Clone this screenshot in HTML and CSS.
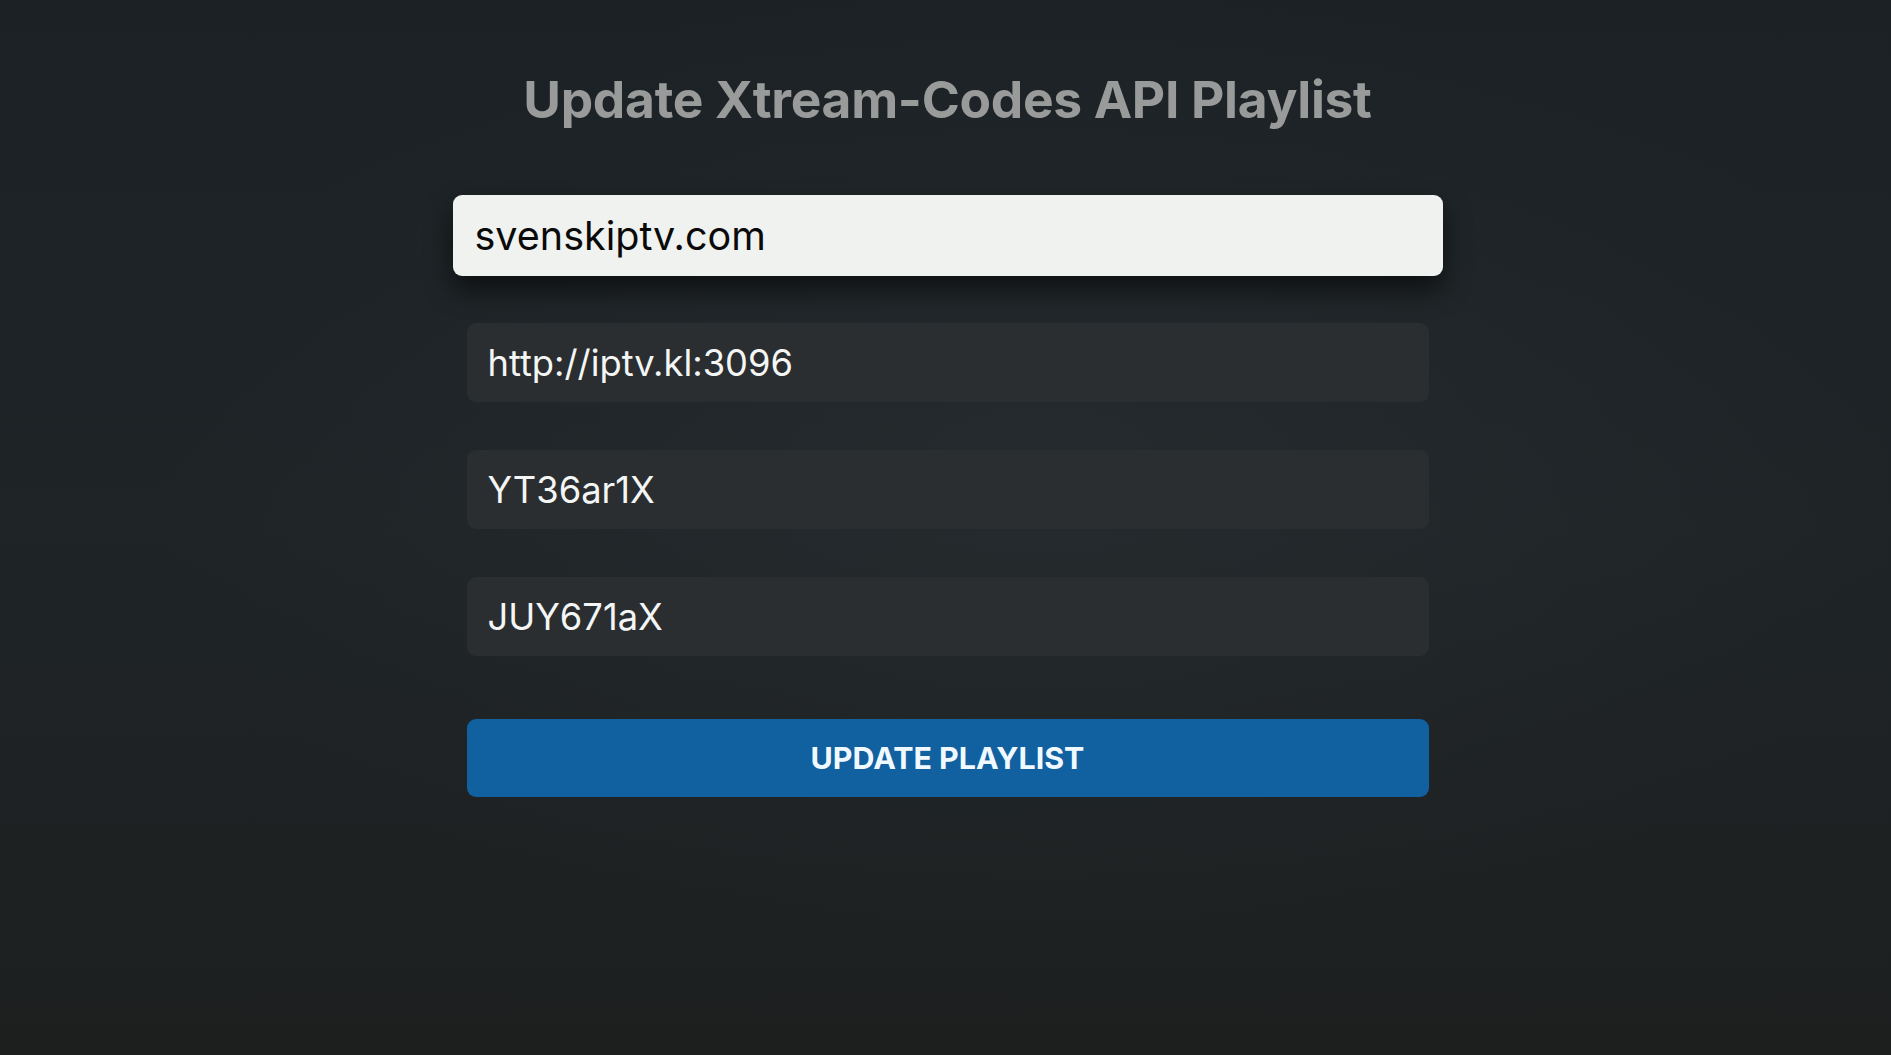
FILE: index.html
```html
<!DOCTYPE html>
<html lang="en">
<head>
    <meta charset="UTF-8">
    <meta name="viewport" content="width=device-width, initial-scale=1.0">
    <title>Update Xtream-Codes API Playlist</title>
    <link rel="stylesheet" href="styles.css">
</head>
<body>
    <main class="page">
        <h1 class="title">Update Xtream-Codes API Playlist</h1>

        <form class="playlist-form" onsubmit="return false">
            <input class="field field-focused" type="text" id="name" value="svenskiptv.com">
            <input class="field" type="text" id="server" value="http://iptv.kl:3096">
            <input class="field" type="text" id="username" value="YT36ar1X">
            <input class="field" type="text" id="password" value="JUY671aX">

            <button class="update-btn" type="submit">UPDATE PLAYLIST</button>
        </form>
    </main>
</body>
</html>
```

FILE: styles.css
```css
html, body {
    height: 100%;
}

body {
    margin: 0;
    font-family: Inter, "Noto Sans", Arial, sans-serif;
    color: #f4f5f5;
    background:
        radial-gradient(ellipse at 55% 45%, rgba(48, 54, 57, 0.35), rgba(0, 0, 0, 0) 60%),
        linear-gradient(180deg, #1b2124 0%, #1f2427 50%, #1d1f1f 100%);
    overflow: hidden;
}

.page {
    width: 962px;
    margin: 0 0 0 calc(50% - 479px);
    padding-top: 68px;
}

.title {
    margin: 0 0 66px;
    font-size: 51.5px;
    font-weight: 700;
    line-height: 62px;
    color: #999b9a;
    text-align: center;
    letter-spacing: -0.3px;
}

.playlist-form {
    display: flex;
    flex-direction: column;
    gap: 48px;
}

.field {
    box-sizing: border-box;
    height: 79px;
    padding: 0 21px;
    border: none;
    border-radius: 9px;
    background: #2a2e30;
    color: #f4f5f5;
    font-family: inherit;
    font-size: 36.3px;
    outline: none;
}

.field-focused {
    height: 81px;
    margin: -1px -14px;
    padding: 0 22px;
    background: #eff2ef;
    color: #0a0a0a;
    font-size: 39.5px;
    box-shadow: 0 14px 26px rgba(0, 0, 0, 0.55);
}

.update-btn {
    height: 78px;
    margin-top: 15px;
    border: none;
    border-radius: 9px;
    background: #1160a0;
    color: #f0f9ff;
    font-family: inherit;
    font-size: 30.4px;
    font-weight: 700;
    cursor: pointer;
}
```
